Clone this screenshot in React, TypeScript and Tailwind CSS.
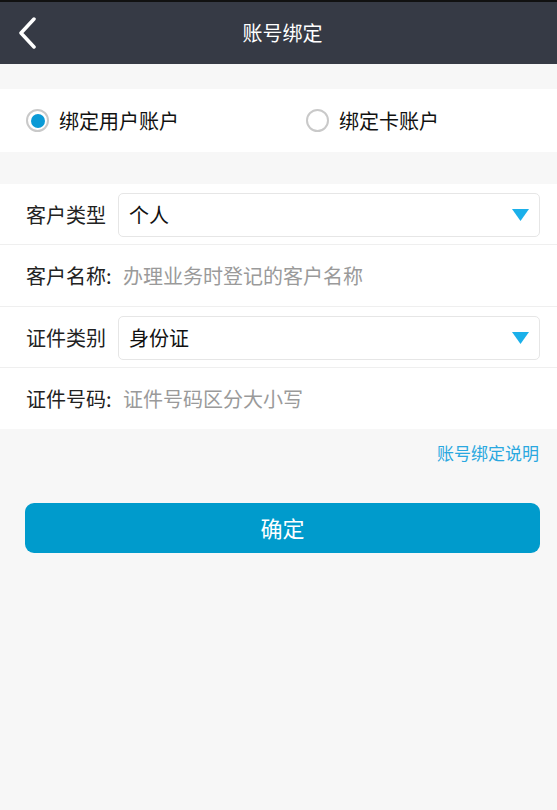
const font = { fontFamily: '"Noto Sans CJK SC", "Noto Sans", sans-serif' };

function Caret() {
  return (
    <svg width="17" height="12" viewBox="0 0 17 12" className="shrink-0">
      <path d="M0 0 H17 L8.5 12 Z" fill="#1bb0ea" />
    </svg>
  );
}

function Radio({ checked }: { checked: boolean }) {
  return (
    <span className="flex h-[23px] w-[23px] items-center justify-center rounded-full border-2 border-[#c9c9c9] bg-white">
      {checked && <span className="h-[14px] w-[14px] rounded-full bg-[#0a9ad6]" />}
    </span>
  );
}

function SelectRow({ label, value }: { label: string; value: string }) {
  return (
    <div className="flex h-[61px] items-center border-b border-[#efefef] pl-[26px] pr-[17px] pt-[1px]">
      <span className="w-[92px] text-[20px] text-[#222]">{label}</span>
      <div className="flex h-[44px] flex-1 items-center justify-between rounded-[5px] border border-[#e6e6e6] pl-[10px] pr-[10px]">
        <span className="text-[20px] text-[#111]">{value}</span>
        <Caret />
      </div>
    </div>
  );
}

function InputRow({ label, placeholder, last }: { label: string; placeholder: string; last?: boolean }) {
  return (
    <div className={`flex items-center pl-[26px] ${last ? "h-[61px]" : "h-[62px] border-b border-[#efefef]"}`}>
      <span className="w-[97px] text-[20px] text-[#222]">{label}</span>
      <span className="text-[20px] text-[#9a9a9a]">{placeholder}</span>
    </div>
  );
}

export default function App() {
  return (
    <div className="min-h-screen bg-[#f7f7f7]" style={font}>
      {/* header */}
      <header className="relative flex h-[64px] items-center justify-center border-t-2 border-[#111] bg-[#363a45] pl-[8px]">
        <svg width="22" height="32" viewBox="0 0 22 32" className="absolute left-[16px] top-[15px]">
          <path d="M18 2 L5 16 L18 30" fill="none" stroke="#fff" strokeWidth="3.5" strokeLinecap="round" strokeLinejoin="round" />
        </svg>
        <h1 className="text-[20px] text-white">账号绑定</h1>
      </header>

      {/* bind type */}
      <div className="mt-[25px] flex h-[63px] items-center bg-white">
        <label className="flex w-[280px] items-center gap-[10px] pl-[26px]">
          <Radio checked />
          <span className="text-[20px] text-[#111]">绑定用户账户</span>
        </label>
        <label className="flex items-center gap-[10px] pl-[26px]">
          <Radio checked={false} />
          <span className="text-[20px] text-[#111]">绑定卡账户</span>
        </label>
      </div>

      {/* form */}
      <div className="mt-[32px] bg-white">
        <SelectRow label="客户类型" value="个人" />
        <InputRow label="客户名称:" placeholder="办理业务时登记的客户名称" />
        <SelectRow label="证件类别" value="身份证" />
        <InputRow label="证件号码:" placeholder="证件号码区分大小写" last />
      </div>

      <div className="flex justify-end pr-[18px] pt-[11px]">
        <a className="text-[17px] text-[#2aa8e0]">账号绑定说明</a>
      </div>

      <div className="pl-[25px] pr-[17px] pt-[37px]">
        <button className="flex h-[50px] w-full items-center justify-center rounded-[9px] bg-[#009bcc] text-[22px] text-white">
          确定
        </button>
      </div>
    </div>
  );
}
